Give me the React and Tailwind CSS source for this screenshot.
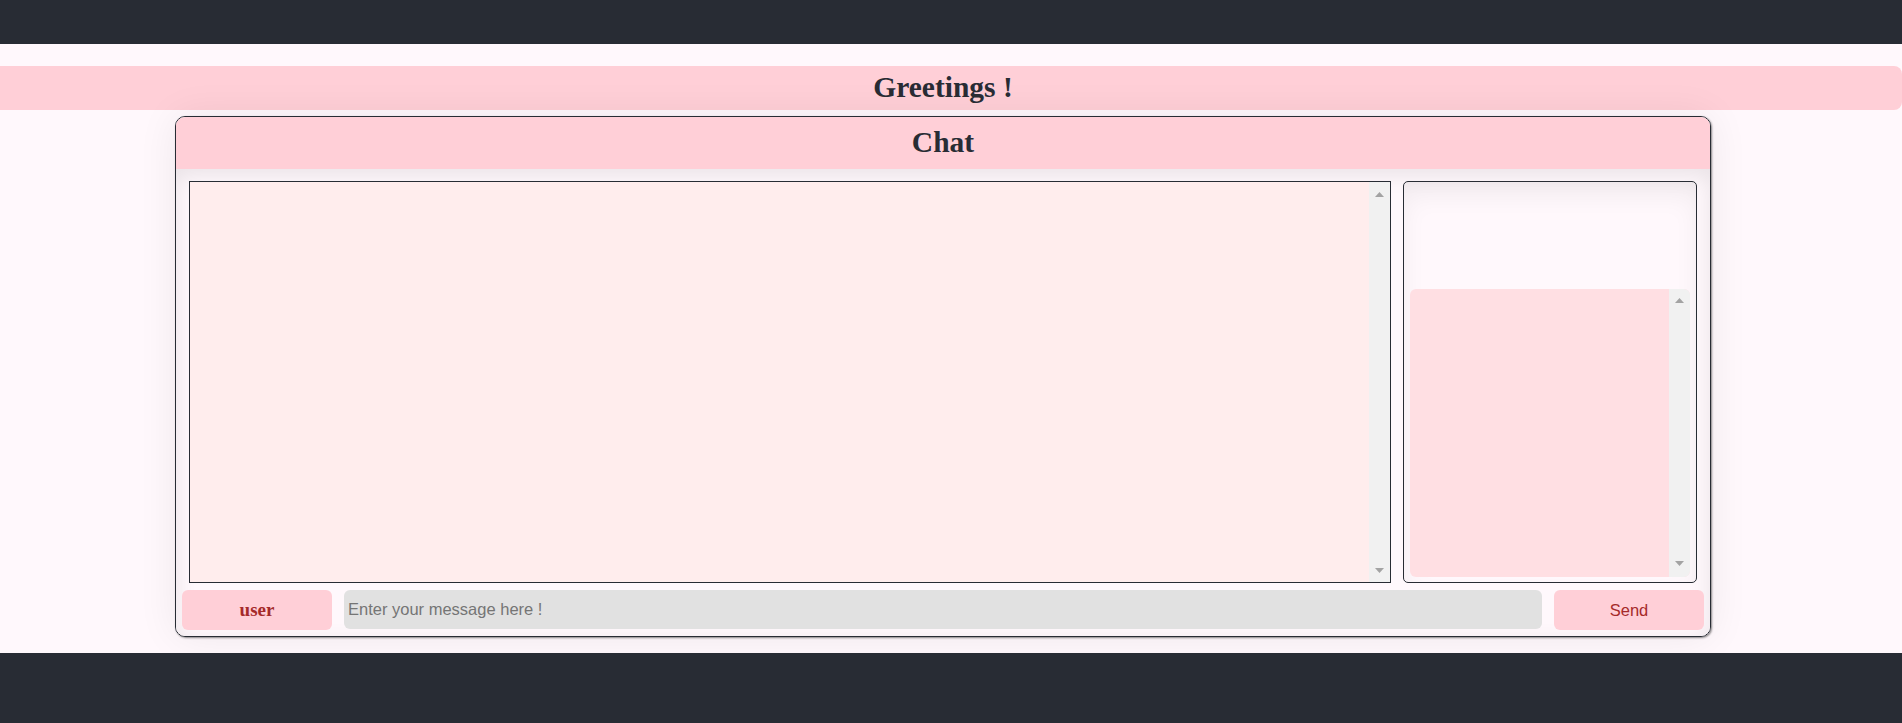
import React from 'react';

const ArrowUp = () => (
    <svg width="9" height="5" viewBox="0 0 9 5" className="block">
        <polygon points="4.5,0 9,5 0,5" fill="#a3a3a3" />
    </svg>
);

const ArrowDown = () => (
    <svg width="9" height="5" viewBox="0 0 9 5" className="block">
        <polygon points="0,0 9,0 4.5,5" fill="#a3a3a3" />
    </svg>
);

// fake classic scrollbar, the reference shows one on both message panes
const Scrollbar = ({ top = 'pt-[10px]', bottom = 'pb-[9px]' }) => (
    <div className={`w-[21px] shrink-0 bg-[#f1f1f1] flex flex-col items-center justify-between ${top} ${bottom}`}>
        <ArrowUp />
        <ArrowDown />
    </div>
);

const App = () => {
    return (
        <div className="min-h-[723px] bg-[#fff8fc] flex flex-col font-['Liberation_Serif',serif] text-[#282c34]">
            <header className="h-[44px] shrink-0 bg-[#282c34]" />

            <main className="flex-1 pt-[22px] pb-[16px]">
                <div className="h-[44px] bg-[#ffcfd7] rounded-r-lg flex items-center justify-center pr-4">
                    <h1 className="text-[29.5px] font-bold leading-none">Greetings !</h1>
                </div>

                <div className="pr-4 mt-[6px]">
                    <div className="mx-auto w-[1536px] h-[521px] border border-[#282c34] rounded-[10px] overflow-hidden flex flex-col shadow-[1px_1px_2px_rgba(0,0,0,0.45),0_0_40px_rgba(0,0,0,0.07)]">
                        <div className="h-[52px] shrink-0 bg-[#ffcfd7] flex items-center justify-center">
                            <h2 className="text-[29.5px] font-bold leading-none">Chat</h2>
                        </div>

                        <div className="flex-1 flex flex-col bg-[#fff8fc] shadow-[inset_0_6px_22px_rgba(0,0,0,0.09)]">
                            <div className="flex gap-[12px] pt-[12px] px-[13px]">
                                <div className="w-[1202px] h-[402px] border border-[#282c34] bg-[#ffeded] flex">
                                    <div className="flex-1" />
                                    <Scrollbar />
                                </div>

                                <div className="w-[294px] h-[402px] border border-[#282c34] rounded-[5px] flex flex-col justify-end px-[6px] pb-[5px] shadow-[inset_0_14px_24px_rgba(0,0,0,0.05)]">
                                    <div className="h-[288px] bg-[#ffdfe3] rounded-[6px] overflow-hidden flex">
                                        <div className="flex-1" />
                                        <Scrollbar top="pt-[9px]" bottom="pb-[11px]" />
                                    </div>
                                </div>
                            </div>

                            <div className="flex gap-[12px] px-[6px] pt-[7px] pb-[6px]">
                                <button className="w-[150px] h-[40px] bg-[#ffcfd7] rounded-[6px] text-[19px] font-bold text-[#a52a2a]">
                                    user
                                </button>
                                <input
                                    type="text"
                                    placeholder="Enter your message here !"
                                    className="w-[1198px] h-[39px] bg-[#e1e1e1] rounded-[6px] px-[4px] outline-none font-['Liberation_Sans',Arial,sans-serif] text-[16.5px] text-[#282c34] placeholder:text-[#757575]"
                                />
                                <button className="w-[150px] h-[40px] bg-[#ffcfd7] rounded-[6px] font-['Liberation_Sans',Arial,sans-serif] text-[16.5px] text-[#a52a2a]">
                                    Send
                                </button>
                            </div>
                        </div>
                    </div>
                </div>
            </main>

            <footer className="h-[70px] shrink-0 bg-[#282c34]" />
        </div>
    );
};

export default App;
